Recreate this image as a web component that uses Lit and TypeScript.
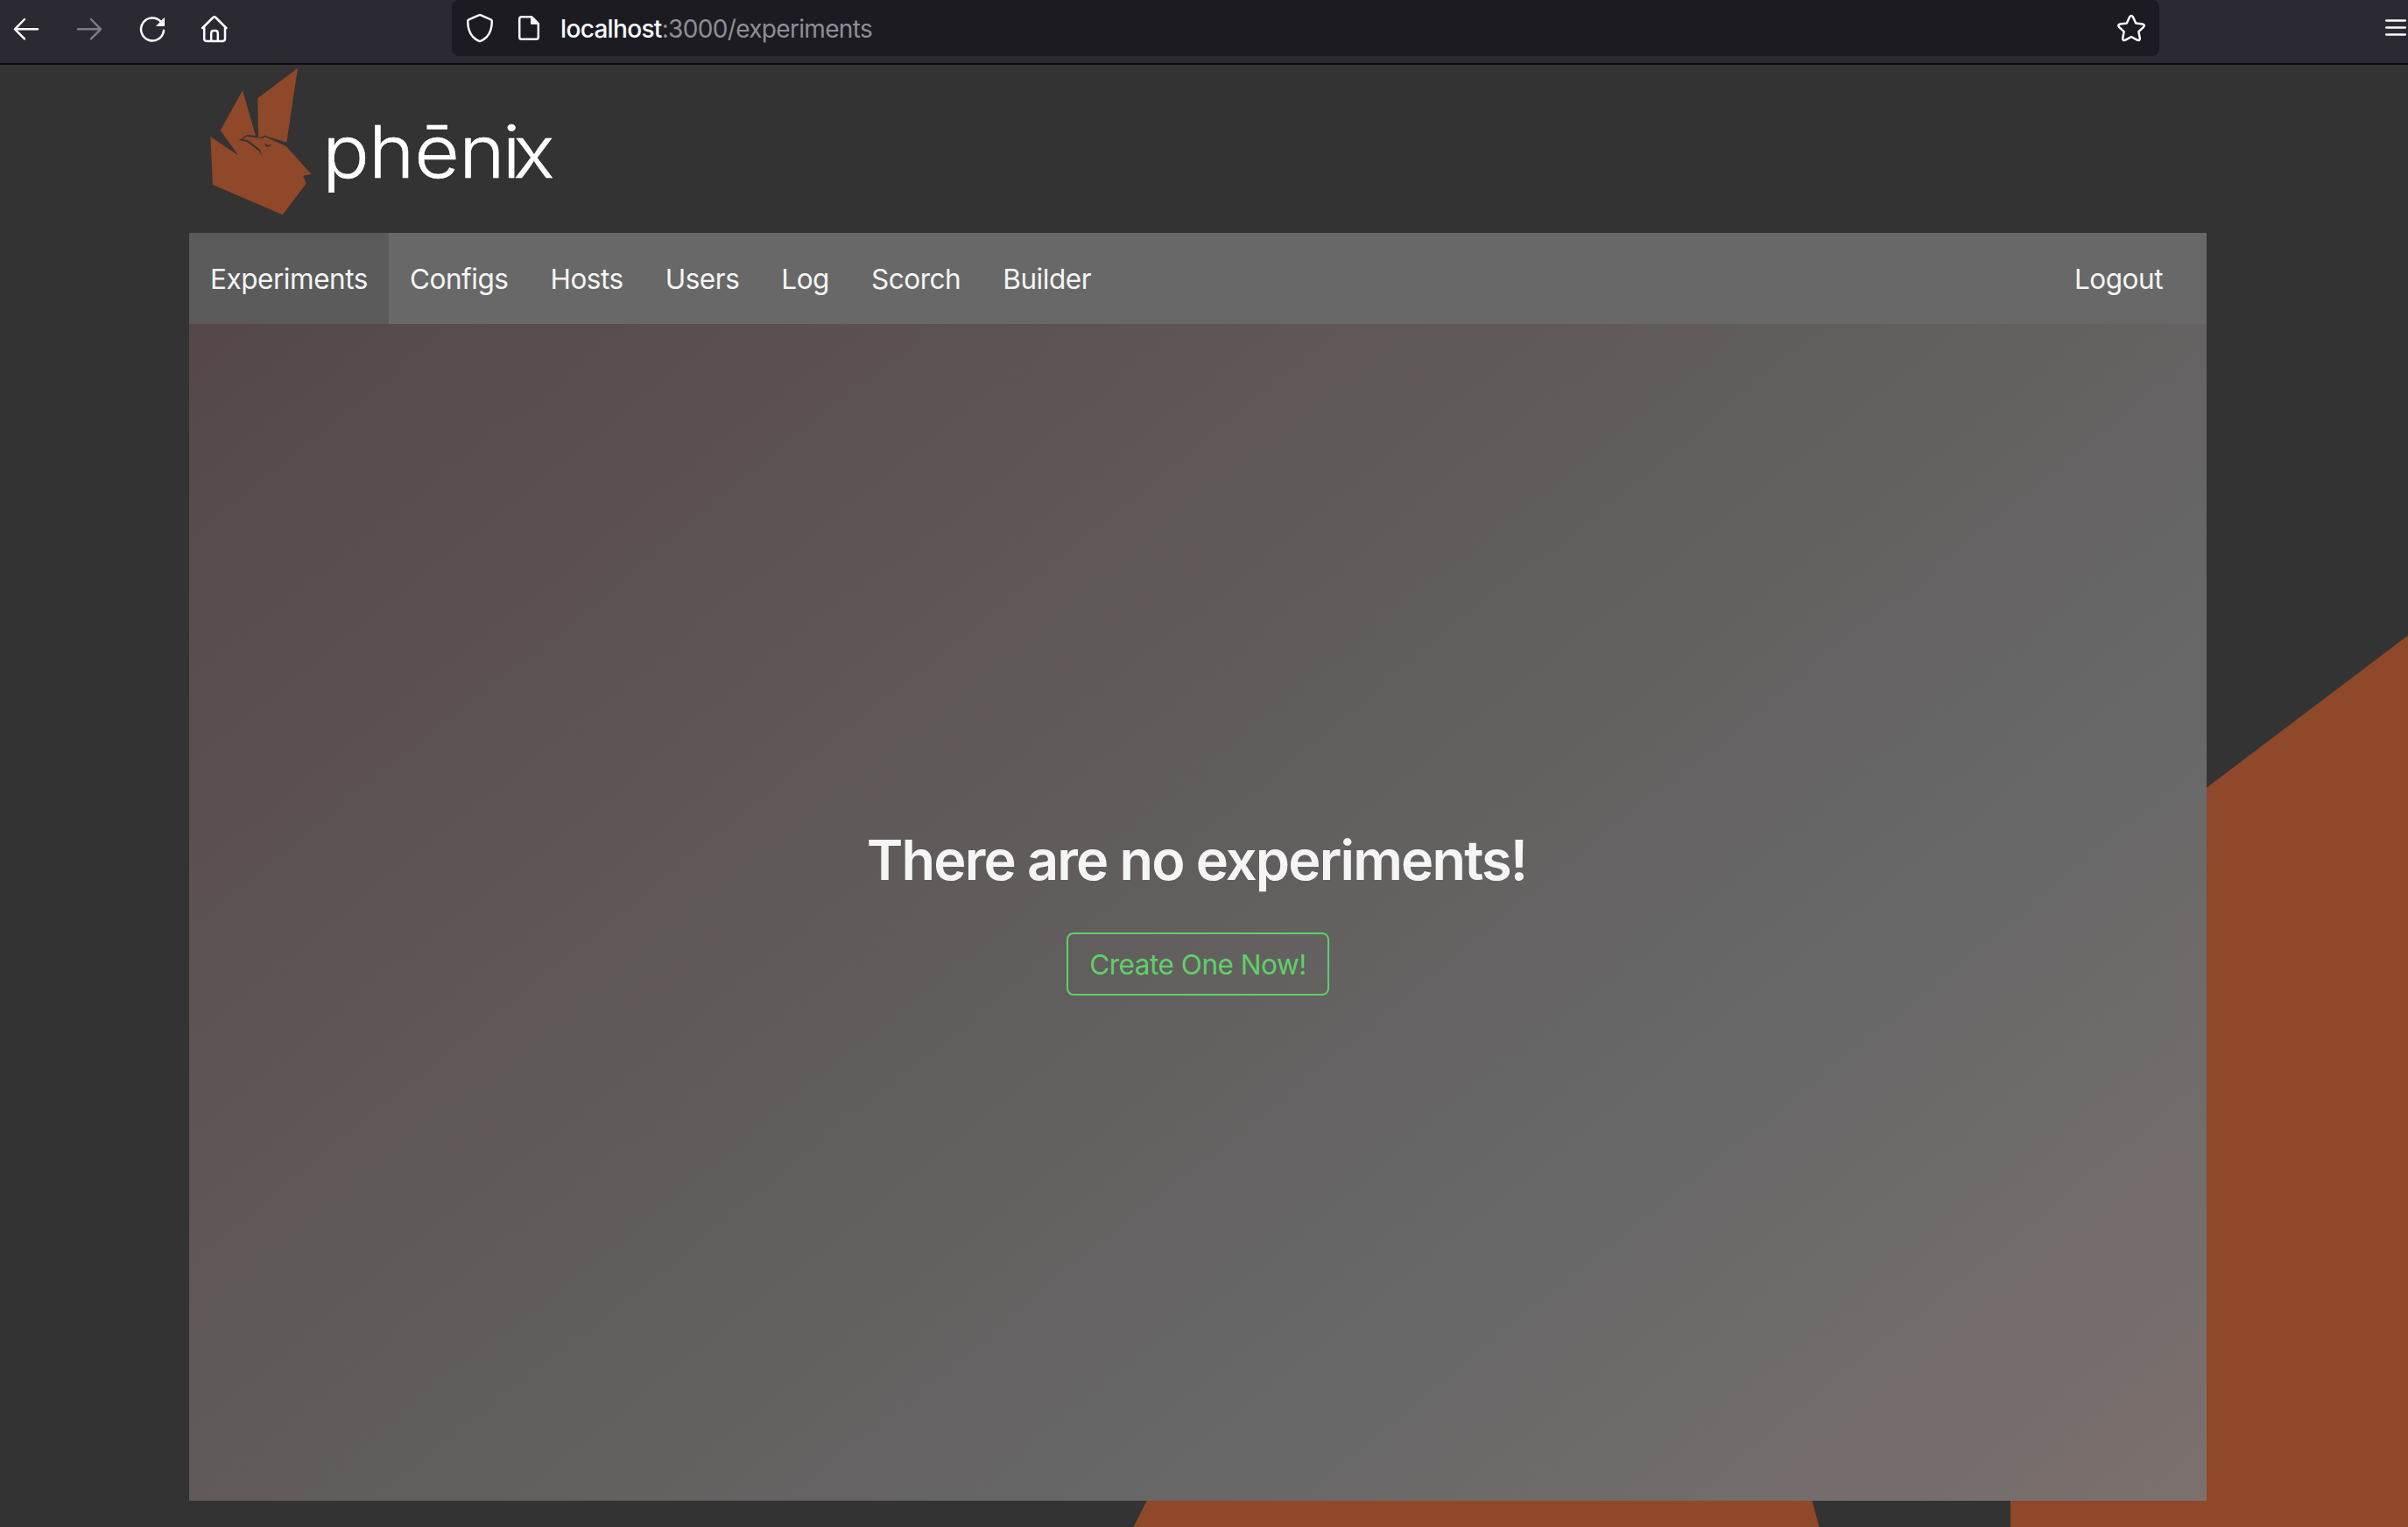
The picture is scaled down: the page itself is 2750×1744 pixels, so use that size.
import { LitElement, html, css, svg } from "lit";
import { customElement } from "lit/decorators.js";

@customElement("browser-bar")
class BrowserBar extends LitElement {
  static styles = css`
    :host { display: block; }
    .bar { box-sizing: border-box; height: 74px; background: #2b2a33; border-bottom: 2px solid #0c0c0d; display: flex; align-items: flex-start; overflow: hidden; }
    .nav { width: 516px; flex: none; display: flex; gap: 32px; padding: 14px 0 0 10px; box-sizing: border-box; }
    .icon { display: block; width: 40px; height: 40px; flex: none; fill: none; stroke: #fbfbfe; stroke-width: 2.5; stroke-linecap: round; stroke-linejoin: round; }
    .dim { stroke: #7c7b81; }
    .solid { fill: #fbfbfe; }
    .field { box-sizing: border-box; width: 1950px; height: 64px; flex: none; background: #1c1b22; border-radius: 8px; display: flex; padding: 12px 12px 0; }
    .second { margin-left: 16px; }
    .url { flex: 1; margin-left: 16px; font: 28px/42px Inter, "Liberation Sans", sans-serif; color: #8f8f94; letter-spacing: -0.67px; white-space: pre; }
    .host { color: #fbfbfe; font-weight: 450; }
    .menu { margin: 12px 0 0 250px; }
  `;
  render() {
    return html`<div class="bar">
      <div class="nav">
        <svg class="icon" viewBox="10 14 40 40"><path d="M43 33.3H17.5M28 22 17 33.3 28 44.3"/></svg>
        <svg class="icon dim" viewBox="82 14 40 40"><path d="M89 33.3H115M104 22 115 33.3 104 44.3"/></svg>
        <svg class="icon" viewBox="154 14 40 40"><path d="M183.5 24.5A13 13 0 1 0 187 34.8"/><path class="solid" stroke-width="1" d="M187.5 21V29.5H179.2Z"/></svg>
        <svg class="icon" viewBox="226 14 40 40"><path d="M231.2 32 243.3 20Q244.7 18.4 246.3 20L258.4 32M233.2 30.5V44.3Q233.2 46.9 235.8 46.9H254.4Q257 46.9 257 44.3V30.5M241.2 46.5V38Q241.2 35 244 35H246Q248.8 35 248.8 38V46.5"/></svg>
      </div>
      <div class="field">
        <svg class="icon" viewBox="528 12 40 40"><path d="M546.8 17.4Q548 16.8 549.2 17.4L560.6 22.3Q562 23 561.8 24.8 561.6 36 556 42 552.5 45.5 549 46.8 548 47.2 547 46.8 543.5 45.5 540 42 534.4 36 534.2 24.8 534 23 535.4 22.3Z"/></svg>
        <svg class="icon second" viewBox="584 12 40 40"><path d="M607 19.2H595.8Q593.2 19.2 593.2 21.8V42.2Q593.2 44.8 595.8 44.8H612.2Q614.8 44.8 614.8 42.2V27Z"/><path class="solid" stroke-width="1" d="M606.5 19V27.3H615Z"/></svg>
        <div class="url"><span class="host">localhost</span>:3000/experiments</div>
        <svg class="icon" viewBox="2414 12 40 40"><path d="M2432 19.4Q2434 16.6 2436 19.4L2439.2 26.5 2446.8 27.5Q2450 28.2 2448 30.8L2442.4 36.2 2443.8 43.6Q2443.9 46.8 2441 45.8L2434 42 2427 45.8Q2424.1 46.8 2424.2 43.6L2425.6 36.2 2420 30.8Q2418 28.2 2421.2 27.5L2428.8 26.5Z"/></svg>
      </div>
      <svg class="icon menu" viewBox="2716 12 40 40"><path d="M2725.2 23.5H2746.8M2725.2 31.5H2746.8M2725.2 39.5H2746.8"/></svg>
    </div>`;
  }
}

const bird = svg`
  <path d="M420 53 283 157 285 291 297 290 306 284 382 308Z"/>
  <path d="M231 130 155 267 216 352 121 288 129 453 368 556 449 449 439 422 467 417 380 321 308 289 298 295 247 287 230 297 249 300 291 332 299 356 288 338 247 306 219 301 246 282 276 285Z"/>
  <path class="eye" d="M306 312 318 317 333 316 318 324 310 321Z"/>`;

@customElement("app-root")
class AppRoot extends LitElement {
  static styles = css`
    :host { display: block; font-family: Inter, "Liberation Sans", sans-serif; }
    .window { position: relative; height: 1744px; background: #333; overflow: hidden; display: flex; flex-direction: column; }
    .backdrop { position: absolute; left: 0; top: 0; width: 2750px; height: 1744px; fill: #8f4829; }
    .content { position: relative; width: 2304px; margin-left: 216px; }
    .brand { display: flex; height: 192px; }
    .logo { display: block; width: 440px; height: 192px; fill: #8f4829; }
    .eye { fill: #333; }
    .word { fill: #fff; stroke: #fff; stroke-width: 1.5px; font-family: Inter, "Liberation Sans", sans-serif; font-weight: 350; font-size: 247px; }
    .tabs { display: flex; height: 104px; background: #686868; color: #f5f5f5; font-size: 31.5px; line-height: 106px; }
    .tab { padding: 0 24px; letter-spacing: -0.46px; }
    .active { background: #5b5b5b; }
    .logout { margin: 0 26px 0 auto; }
    .hero { height: 1344px; background: linear-gradient(141deg, #564848 0%, #686868 71%, #7b706e 100%); display: flex; flex-direction: column; align-items: center; box-sizing: border-box; padding-top: 566px; }
    .title { margin: 0; padding-right: 3px; color: #f5f5f5; font-size: 63px; line-height: 92px; font-weight: 600; letter-spacing: -1.84px; white-space: nowrap; }
    .create { box-sizing: border-box; width: 300px; height: 72px; margin: 37px 0 0; padding: 0; background: transparent; border: 2px solid #5fd068; border-radius: 8px; color: #5fd068; font: 31.5px/69px Inter, "Liberation Sans", sans-serif; letter-spacing: -0.47px; white-space: nowrap; }
  `;
  render() {
    const tabs = ["Experiments", "Configs", "Hosts", "Users", "Log", "Scorch", "Builder"];
    return html`<div class="window">
      <svg class="backdrop" viewBox="0 0 2750 1744">
        <path d="M2296 1744V1069L2750 725.7V1744ZM1294.5 1744 1309.6 1714 1500 1340H1970L2069.5 1714 2077.5 1744Z"/>
      </svg>
      <browser-bar></browser-bar>
      <div class="content">
        <div class="brand">
          <svg class="logo" viewBox="48 42 1320 576">
            ${bird}
            <text class="word" transform="scale(1.08 1)" y="429" x="467.6 613.8 759 901 1038 1073">phēnix</text>
          </svg>
        </div>
        <nav class="tabs">
          ${tabs.map((t, i) => html`<div class="tab ${i === 0 ? "active" : ""}">${t}</div>`)}
          <div class="tab logout">Logout</div>
        </nav>
        <main class="hero">
          <h1 class="title">There are no experiments!</h1>
          <button class="create">Create One Now!</button>
        </main>
      </div>
    </div>`;
  }
}
